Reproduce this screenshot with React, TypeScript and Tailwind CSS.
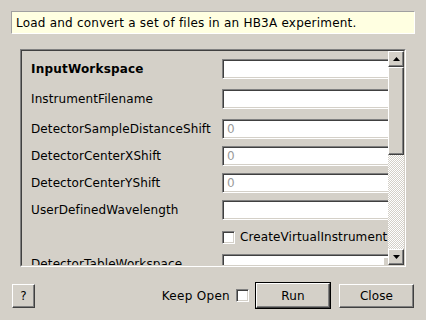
import React from "react";

const sunken =
  "border border-t-[#808080] border-l-[#808080] border-r-white border-b-white shadow-[inset_1px_1px_0_#404040,inset_-1px_-1px_0_#d4d0c8]";
const raised =
  "border border-t-white border-l-white border-r-[#404040] border-b-[#404040] shadow-[inset_-1px_-1px_0_#808080]";

function Row({ label, value, bold, className }: { label: string; value?: string; bold?: boolean; className: string }) {
  return (
    <div className={`flex items-center h-[20px] shrink-0 ${className}`}>
      <div className={`w-[191px] shrink-0 whitespace-nowrap ${bold ? "font-bold tracking-[0.2px]" : ""}`}>{label}</div>
      <div className={`w-[200px] shrink-0 h-[20px] bg-white ${sunken} flex items-center pl-[4px] text-[#9a9a9a]`}>
        {value}
      </div>
    </div>
  );
}

function Arrow({ up }: { up?: boolean }) {
  return (
    <svg width="7" height="4" viewBox="0 0 7 4">
      {up ? <polygon points="3.5,0 7,4 0,4" fill="#000" /> : <polygon points="0,0 7,0 3.5,4" fill="#000" />}
    </svg>
  );
}

export default function App() {
  return (
    <div className="w-[426px] h-[320px] bg-[#d4d0c8] font-['DejaVu_Sans',sans-serif] text-[12px] tracking-[0.1px] text-black flex flex-col overflow-hidden">
      <div className="mx-[11px] mt-[11px] h-[23px] shrink-0 bg-[#ffffe1] border border-t-[#a0a0a0] border-l-[#a0a0a0] border-r-white border-b-white flex items-center pl-[4px] whitespace-nowrap tracking-[0.22px]">
        Load and convert a set of files in an HB3A experiment.
      </div>
      <div className="ml-[20px] mr-[20px] mt-[15px] h-[218px] shrink-0 border border-t-[#808080] border-l-[#808080] border-r-white border-b-white">
        <div className="w-full h-full border border-t-[#404040] border-l-[#404040] border-r-[#d4d0c8] border-b-[#d4d0c8] flex">
          <div className="flex-1 min-w-0 overflow-hidden pt-[8px] pl-[9px] flex flex-col">
            <Row label="InputWorkspace" bold className="" />
            <Row label="InstrumentFilename" className="mt-[10px]" />
            <Row label="DetectorSampleDistanceShift" value="0" className="mt-[10px]" />
            <Row label="DetectorCenterXShift" value="0" className="mt-[7px]" />
            <Row label="DetectorCenterYShift" value="0" className="mt-[7px]" />
            <Row label="UserDefinedWavelength" className="mt-[7px]" />
            <div className="flex items-center h-[20px] shrink-0 mt-[7px]">
              <div className="w-[191px] shrink-0" />
              <div className={`w-[13px] h-[13px] shrink-0 bg-white ${sunken}`} />
              <div className="ml-[5px] whitespace-nowrap">CreateVirtualInstrument</div>
            </div>
            <div className="flex items-center h-[20px] shrink-0 mt-[7px]">
              <div className="w-[191px] shrink-0 whitespace-nowrap">DetectorTableWorkspace</div>
              <div className={`w-[180px] shrink-0 h-[20px] bg-white ${sunken} flex justify-end p-[2px]`}>
                <div className={`w-[16px] h-full bg-[#d4d0c8] ${raised} flex items-center justify-center`}>
                  <Arrow />
                </div>
              </div>
            </div>
          </div>
          <div className="w-[16px] shrink-0 flex flex-col">
            <div className={`h-[16px] shrink-0 bg-[#d4d0c8] ${raised} flex items-center justify-center`}>
              <Arrow up />
            </div>
            <div className={`h-[88px] shrink-0 bg-[#d4d0c8] ${raised}`} />
            <div className="flex-1 bg-[repeating-conic-gradient(#ffffff_0_25%,#d4d0c8_0_50%)] bg-[length:2px_2px]" />
            <div className={`h-[16px] shrink-0 bg-[#d4d0c8] ${raised} flex items-center justify-center`}>
              <Arrow />
            </div>
          </div>
        </div>
      </div>
      <div className="mt-[15px] h-[27px] shrink-0 flex items-center pl-[12px] pr-[12px]">
        <div className={`w-[23px] h-[24px] ${raised} flex items-center justify-center`}>?</div>
        <div className="flex-1" />
        <div className="whitespace-nowrap tracking-[0.3px]">Keep Open</div>
        <div className={`ml-[6px] w-[13px] h-[13px] bg-white ${sunken}`} />
        <div className="ml-[6px] w-[76px] h-[27px] border border-black">
          <div className={`w-full h-full ${raised} flex items-center justify-center`}>Run</div>
        </div>
        <div className={`ml-[8px] w-[75px] h-[24px] ${raised} flex items-center justify-center`}>Close</div>
      </div>
    </div>
  );
}
